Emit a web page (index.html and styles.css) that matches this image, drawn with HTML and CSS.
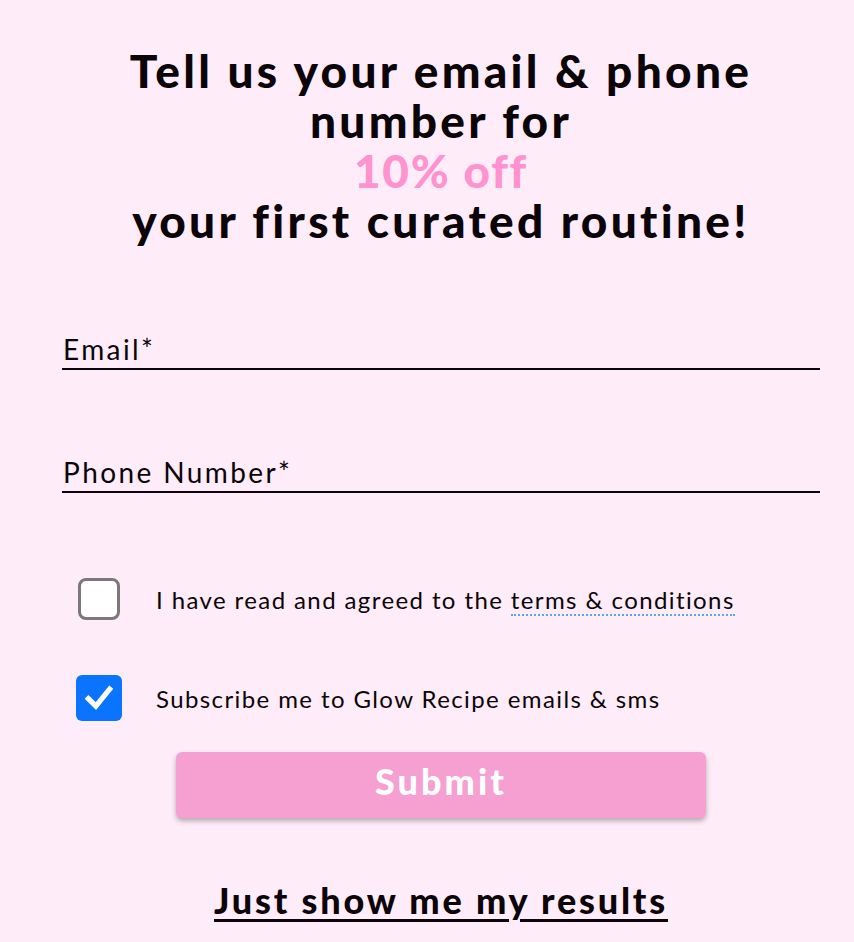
FILE: index.html
```html
<!DOCTYPE html>
<html lang="en">

<head>
    <meta charset="UTF-8">
    <meta name="viewport" content="width=device-width, initial-scale=1.0">
    <title>Glow Recipe - Your routine</title>
    <link rel="stylesheet" href="styles.css">
</head>

<body>
    <main class="signup">
        <h1 class="headline">
            <span class="line">Tell us your email &amp; phone</span>
            <span class="line">number for</span>
            <span class="line promo">10% off</span>
            <span class="line">your first curated routine!</span>
        </h1>

        <form class="signup-form">
            <label class="field">
                <span class="field-label">Email*</span>
            </label>
            <label class="field">
                <span class="field-label">Phone Number*</span>
            </label>

            <div class="check-row">
                <span class="box"></span>
                <span class="check-text">I have read and agreed to the <a class="terms" href="#">terms &amp; conditions</a></span>
            </div>
            <div class="check-row">
                <span class="box checked">
                    <svg viewBox="0 0 24 24" width="30" height="30">
                        <path d="M3.5 12.5 L9.5 18.5 L20.5 5" fill="none" stroke="#fff" stroke-width="4.2" stroke-linecap="square" />
                    </svg>
                </span>
                <span class="check-text">Subscribe me to Glow Recipe emails &amp; sms</span>
            </div>

            <button class="submit" type="button">Submit</button>
        </form>

        <a class="results-link" href="#">Just show me my results</a>
    </main>
</body>

</html>
```

FILE: styles.css
```css
body {
    margin: 0;
    background-color: #feecf8;
    font-family: Lato, "Noto Sans", sans-serif;
    color: #0b0509;
}

.signup {
    display: flex;
    flex-direction: column;
    align-items: center;
    padding: 46px 34px 0 62px;
}

.headline {
    margin: 0;
    font-size: 46px;
    line-height: 50px;
    font-weight: 900;
    text-align: center;
    letter-spacing: 3.3px;
}

.headline .line {
    display: block;
}

.headline .promo {
    color: #ff93cf;
    letter-spacing: 1.8px;
}

.signup-form {
    align-self: stretch;
    display: flex;
    flex-direction: column;
    margin-top: 84px;
}

.field {
    display: block;
    border-bottom: 2px solid #0b0509;
    height: 38px;
    margin-bottom: 83px;
}

.field-label {
    display: block;
    margin-top: -1px;
    font-size: 28px;
    line-height: 40px;
    letter-spacing: 2.4px;
    padding-left: 1px;
}

.check-row {
    display: flex;
    align-items: center;
    gap: 36px;
    padding-left: 16px;
    height: 48px;
    margin-bottom: 51px;
}

.check-row:first-of-type {
    margin-top: -1px;
}

.box {
    width: 36px;
    height: 36px;
    border: 3px solid #7b777a;
    border-radius: 8px;
    background: #fff;
    display: flex;
    align-items: center;
    justify-content: center;
}

.box.checked {
    width: 46px;
    height: 46px;
    border: none;
    border-radius: 6px;
    background: #0a74ff;
    margin-left: -2px;
    margin-right: -2px;
}

.check-text {
    font-size: 24px;
    letter-spacing: 1.4px;
}

.terms {
    color: inherit;
    text-decoration: none;
    border-bottom: 2px dotted #5aa6ec;
}

.submit {
    align-self: flex-start;
    margin: -21px 0 0 114px;
    padding: 0 0 8px;
    width: 530px;
    height: 66px;
    border: none;
    border-radius: 6px;
    background: #f5a0d0;
    box-shadow: 0 3px 5px rgba(60, 40, 50, 0.35);
    color: #fff;
    font-family: inherit;
    font-size: 36px;
    font-weight: 900;
    letter-spacing: 3px;
}

.results-link {
    margin-top: 60px;
    font-size: 36px;
    font-weight: 900;
    letter-spacing: 2.8px;
    color: #0b0509;
    text-decoration-thickness: 3px;
    text-underline-offset: 5px;
}
```
